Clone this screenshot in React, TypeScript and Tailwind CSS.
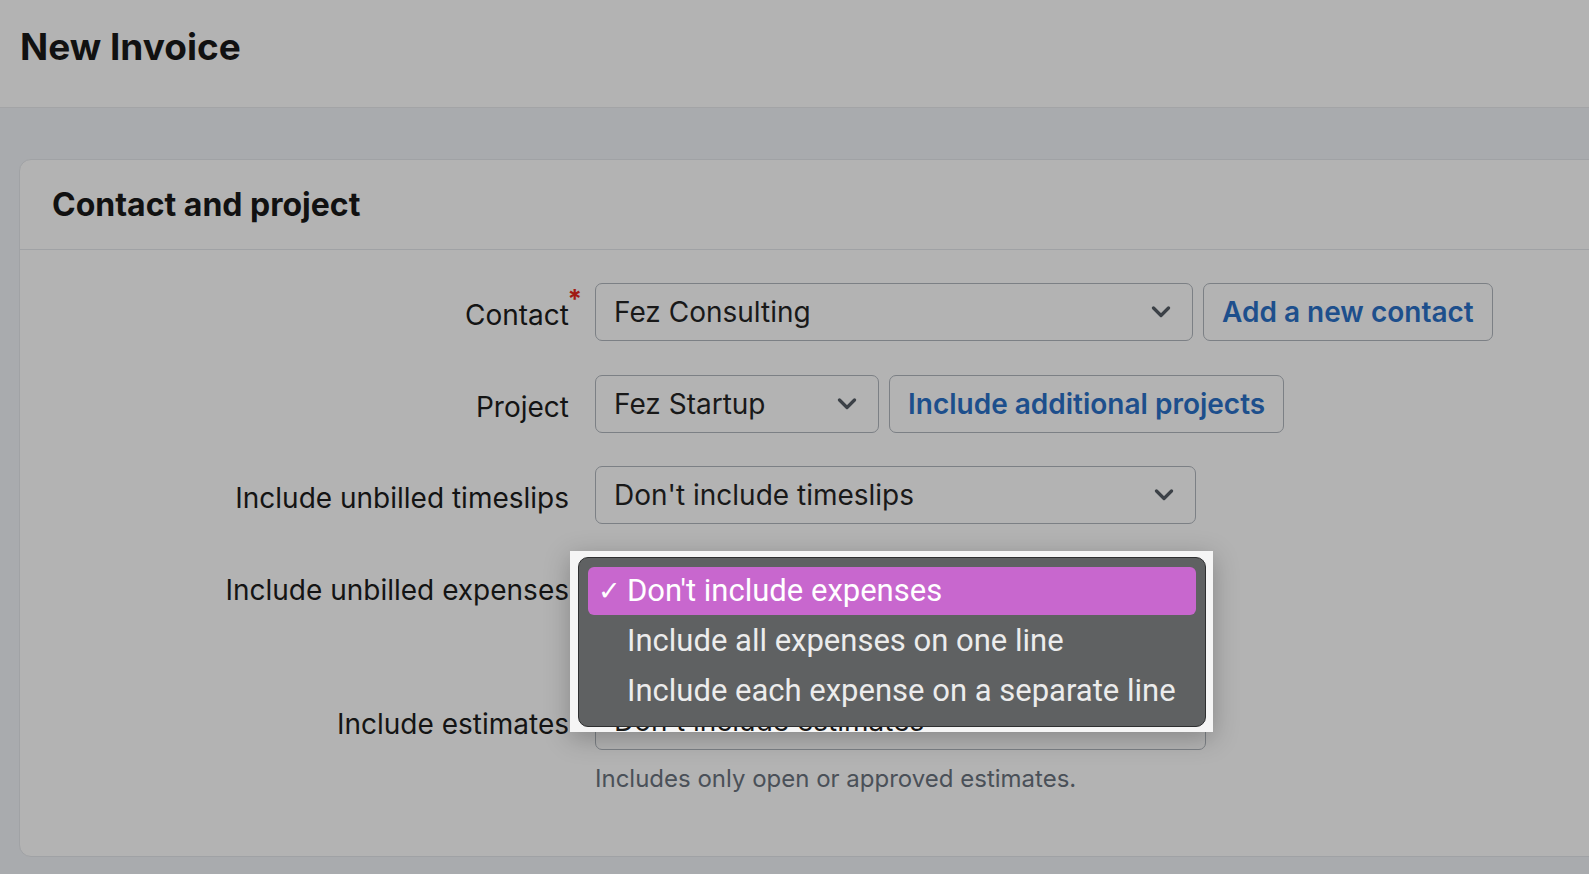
const labelCls = 'w-[549px] shrink-0 pt-[6px] text-right text-[28px] text-[#141414] leading-none'
const selectCls =
  'h-[58px] flex items-center justify-between rounded-[7px] border border-[#7c8085] pl-[18px] pr-[21px] text-[28px] text-[#191919]'
const buttonCls =
  'h-[58px] flex items-center rounded-[7px] border border-[#7c8085] px-[18px] text-[28px] font-semibold text-[#1d4f8c]'

function Chevron() {
  return (
    <svg width="20" height="12" viewBox="0 0 20 12" fill="none" className="shrink-0">
      <path d="M2.5 2 L10 9.5 L17.5 2" stroke="#3c4147" strokeWidth="3.2" strokeLinecap="round" strokeLinejoin="round" />
    </svg>
  )
}

function ExpensesMenu() {
  const items = ["Don't include expenses", 'Include all expenses on one line', 'Include each expense on a separate line']
  return (
    // rim has no z-index so the estimates text below can show over its bottom edge
    <div className="absolute left-[-25px] top-[-7px] bg-[#f5f5f5] pl-[8px] pr-[7px] pt-[6px] pb-[5px] shadow-[0_6px_24px_rgba(0,0,0,0.25)]">
      <div
        className="relative z-30 flex w-[628px] flex-col gap-[2px] rounded-[10px] border border-[#2e2f30] bg-[#5f6162] px-[9px] pt-[9px] pb-[11px]"
        style={{ fontFamily: 'Roboto, "Liberation Sans", sans-serif' }}
      >
        {items.map((t, i) => (
          <div
            key={t}
            className={`flex h-[48px] items-center rounded-[6px] text-[31px] ${
              i === 0 ? 'bg-[#c867ce] text-white' : 'text-[#ececec]'
            }`}
          >
            <span className="w-[39px] shrink-0 pl-[10px] text-[27px]">{i === 0 ? '✓' : ''}</span>
            <span>{t}</span>
          </div>
        ))}
      </div>
    </div>
  )
}

export default function App() {
  return (
    <div
      className="h-[874px] w-full overflow-hidden bg-[#a9abae]"
      style={{ fontFamily: 'Inter, "Liberation Sans", sans-serif' }}
    >
      <header className="h-[108px] border-b border-[#a3a4a6] bg-[#b3b3b3] pl-[20px] pt-[25px]">
        <h1 className="text-[37px] font-bold leading-[44px] text-[#111]">New Invoice</h1>
      </header>

      <section className="ml-[19px] mt-[51px] w-[1620px] rounded-[12px] border border-[#a0a2a5] bg-[#b3b3b3]">
        <div className="flex h-[90px] items-center border-b border-[#a0a2a5] px-[32px]">
          <h2 className="text-[32px] font-bold text-[#111]">Contact and project</h2>
        </div>

        <div className="flex flex-col pt-[33px] pb-[61px]">
          <div className="flex items-center gap-[26px]">
            <label className={labelCls}>
              <span className="relative">
                Contact
                <span className="absolute -right-[13px] -top-[12px] text-[26px] font-bold text-[#a11a14]">*</span>
              </span>
            </label>
            <div className={`${selectCls} w-[598px]`}>
              <span>Fez Consulting</span>
              <Chevron />
            </div>
            <button className={`${buttonCls} ml-[-16px]`}>Add a new contact</button>
          </div>

          <div className="mt-[34px] flex items-center gap-[26px]">
            <label className={labelCls}>Project</label>
            <div className={`${selectCls} w-[284px]`}>
              <span>Fez Startup</span>
              <Chevron />
            </div>
            <button className={`${buttonCls} ml-[-16px]`}>Include additional projects</button>
          </div>

          <div className="mt-[33px] flex items-center gap-[26px]">
            <label className={labelCls}>Include unbilled timeslips</label>
            <div className={`${selectCls} w-[601px]`}>
              <span>Don't include timeslips</span>
              <Chevron />
            </div>
          </div>

          <div className="mt-[34px] flex items-center gap-[26px]">
            <label className={labelCls}>Include unbilled expenses</label>
            <div className="relative">
              <div className={`${selectCls} w-[611px]`}>
                <span>Don't include expenses</span>
                <Chevron />
              </div>
              <ExpensesMenu />
            </div>
          </div>

          <div className="mt-[76px] flex items-center gap-[26px]">
            <label className={labelCls}>Include estimates</label>
            <div className={`${selectCls} w-[611px]`}>
              <span className="relative z-20">Don't include estimates</span>
              <Chevron />
            </div>
          </div>
          <p className="ml-[575px] mt-[13px] text-[24px] leading-[32px] text-[#4a5058]">
            Includes only open or approved estimates.
          </p>
        </div>
      </section>
    </div>
  )
}
